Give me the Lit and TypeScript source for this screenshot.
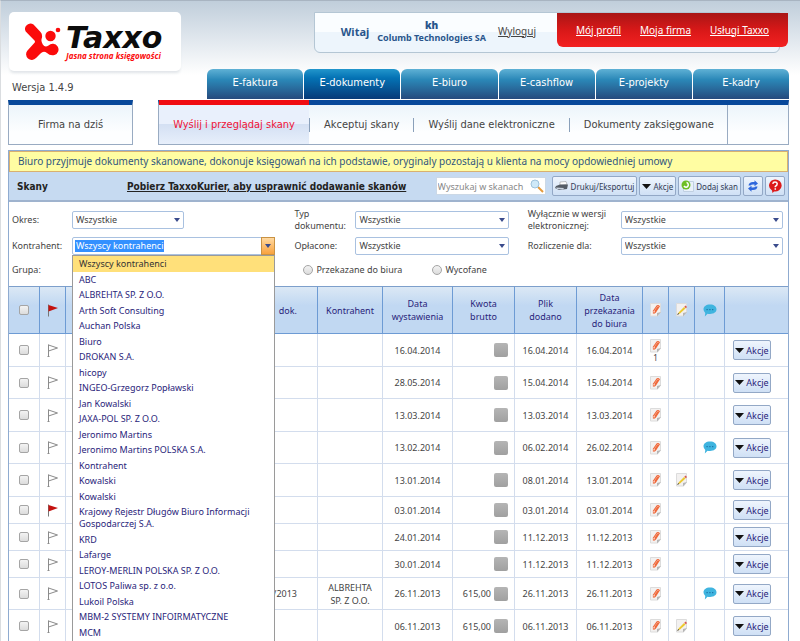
import { LitElement, html, css, svg, nothing } from "lit";
import { customElement } from "lit/decorators.js";
import { classMap } from "lit/directives/class-map.js";

interface Row {
  flag?: boolean;
  doc?: string;
  contractor?: string;
  issued: string;
  amount?: string;
  added: string;
  sent: string;
  count?: number;
  note?: boolean;
  comment?: boolean;
  compact?: boolean;
}

const ROWS: Row[] = [
  { issued: "16.04.2014", added: "16.04.2014", sent: "16.04.2014", count: 1 },
  { issued: "28.05.2014", added: "15.04.2014", sent: "15.04.2014" },
  { issued: "13.03.2014", added: "13.03.2014", sent: "13.03.2014" },
  { issued: "13.02.2014", added: "06.02.2014", sent: "26.02.2014", comment: true },
  { issued: "13.01.2014", added: "08.01.2014", sent: "13.01.2014", note: true },
  { issued: "03.01.2014", added: "03.01.2014", sent: "03.01.2014", flag: true, compact: true },
  { issued: "24.01.2014", added: "11.12.2013", sent: "11.12.2013", compact: true },
  { issued: "30.01.2014", added: "11.12.2013", sent: "11.12.2013", compact: true },
  { doc: "/2013", contractor: "ALBREHTA SP. Z O.O.", issued: "26.11.2013", amount: "615,00", added: "26.11.2013", sent: "26.11.2013", comment: true },
  { issued: "06.11.2013", amount: "615,00", added: "06.11.2013", sent: "06.11.2013", note: true },
];

const CONTRACTORS = [
  "Wszyscy kontrahenci", "ABC", "ALBREHTA SP. Z O.O.", "Arth Soft Consulting", "Auchan Polska",
  "Biuro", "DROKAN S.A.", "hicopy", "INGEO-Grzegorz Popławski", "Jan Kowalski",
  "JAXA-POL SP. Z O.O.", "Jeronimo Martins", "Jeronimo Martins POLSKA S.A.", "Kontrahent",
  "Kowalski", "Kowalski", "Krajowy Rejestr Długów Biuro Informacji Gospodarczej S.A.", "KRD",
  "Lafarge", "LEROY-MERLIN POLSKA SP. Z O.O.", "LOTOS Paliwa sp. z o.o.", "Lukoil Polska",
  "MBM-2 SYSTEMY INFOIRMATYCZNE", "MCM",
];

const TABS = ["E-faktura", "E-dokumenty", "E-biuro", "E-cashflow", "E-projekty", "E-kadry"];
const SUBTABS = ["Wyślij i przeglądaj skany", "Akceptuj skany", "Wyślij dane elektroniczne", "Dokumenty zaksięgowane"];

const icon = (w: number, h: number, body: unknown) =>
  html`<svg width=${w} height=${h} viewBox="0 0 ${w} ${h}" aria-hidden="true">${body}</svg>`;

const page = svg`<path d="M.5 .5h10v9l-3 3.500h-7z" fill="#f3f1f0" stroke="#dcdcdc"/><path d="M11 9l-4 4.500V10z" fill="#b5b5b5"/>`;

const clipIcon = () => icon(12, 14, svg`${page}
  <path d="M3 8.500L6.500 3.500Q8 1.800 9.300 3.300L6 8.500Q4.300 11 3 9.500M4.700 8.500L7.800 4.200" fill="none" stroke="#f0683a" stroke-width="1.200"/>`);
const noteIcon = () => icon(12, 14, svg`${page}
  <path d="M1.500 11.500L3 9L8 4L9.500 5.500L4 10.500Z" fill="#ecc92f"/><path d="M8.300 3.700l1.200-1.200 1.500 1.500-1.200 1.200z" fill="#d8574f"/><path d="M1 12l1.200-2 1 1z" fill="#444"/>`);
const commentIcon = () => icon(14, 13, svg`
  <path d="M7 .5C11 .5 13.500 2.600 13.500 5.300S11 10 7 10C6 10 5.200 9.900 4.500 9.700L1.800 12.500 2.300 9Q.5 7.500 .5 5.300C.5 2.600 3 .5 7 .5Z" fill="#3fb4df"/>
  <g fill="#1b6fa5"><rect x="3.500" y="5" width="1.200" height="1.200"/><rect x="6.300" y="5" width="1.200" height="1.200"/><rect x="9.100" y="5" width="1.200" height="1.200"/></g>`);
const flagIcon = (red = false) => icon(12, 13, red
  ? svg`<path d="M1.500 .5v12" stroke="#777" stroke-width="1"/><path d="M1.500 1L11 4 1.500 7.500z" fill="#c4120f"/>`
  : svg`<path d="M1.500 .5v12M1.500 1L10.500 4 1.500 7M.5 12.500h2" fill="none" stroke="#8b8b8b"/>`);
const downIcon = () => icon(9, 5, svg`<path d="M0 0h9L4.500 5z" fill="#111"/>`);
const printIcon = () => icon(14, 10, svg`
  <path d="M5 1l6-.5 1 3-7 1z" fill="#fff" stroke="#888" stroke-width=".5"/><path d="M1 5L5 3.500h8L12 8 4 9 0 7z" fill="#555c66"/><path d="M1 6.500l8 .5-1 1.500-6-.5z" fill="#c9d2de"/>`);
const addIcon = () => icon(13, 14, svg`
  <path d="M2.500 2.500h10v10h-10z" fill="#e9f1fa" stroke="#c0d0e2"/><circle cx="5" cy="6" r="4.500" fill="#6dbf25"/>
  <path d="M3 7a2.300 2.300 0 1 0 2.500-3.400" fill="none" stroke="#fff" stroke-width="1.500"/>`);
const refreshIcon = () => icon(12, 12, svg`
  <path d="M1.500 5.500Q2 2 6 2H7.500V.2L11 3.500 7.500 6.200V4.500H6Q4 4.500 3.500 5.500Z" fill="#2e67dc"/>
  <path d="M10.500 6.500Q10 10 6 10H4.500V11.800L1 8.500 4.500 5.800V7.500H6Q8 7.500 8.500 6.500Z" fill="#2e67dc"/>`);
const helpIcon = () => icon(14, 14, svg`
  <path d="M7 .5a6.500 6 0 1 1-1 11.900L4.500 14 4 11.500A6.500 6 0 0 1 7 .5Z" fill="#dc1a1a"/>
  <path d="M4.800 4.800Q5 3 7 3t2.200 1.700T7.300 7.500v.8M7.300 9.300v1.400" fill="none" stroke="#fff" stroke-width="1.500"/>`);
const searchIcon = () => icon(14, 14, svg`
  <path d="M8 8l5 5" stroke="#e59a3c" stroke-width="2"/><circle cx="5" cy="5" r="4" fill="#cfe9f8" stroke="#9fc3dc"/>`);

const logoMark = () => icon(37, 39, svg`
  <g fill="#fb0b0b"><path d="M9.500 2.500A5.400 5.400 0 0 0 1.700 9.500L10.500 18.500Q11.500 19.800 10.300 21L3.500 28.500A5.500 5.500 0 1 0 12 36L16.500 31.500Q19.500 28.500 23 31Q26 34 30.500 33A5.800 5.800 0 1 0 24.500 23.500Q21 26 18.800 22.500Q16.500 19 18 15.500Q18.500 12 16.500 10Z"/>
  <circle cx="26.500" cy="14" r="5.200"/><circle cx="34" cy="8" r="2.300"/></g>`);

@customElement("app-root")
export class AppRoot extends LitElement {
  static styles = css`
    :host {
      display: block;
      box-sizing: border-box;
      min-height: 100vh;
      overflow: hidden;
      padding: 11px 11px 0 7px;
      border-top: 1px solid #a8b4c1;
      border-left: 1px solid #dadde0;
      background: linear-gradient(#c0cedb, #ffffff 74px);
      font: 9px/13px "Noto Sans", "Open Sans", sans-serif;
      color: #444;
    }
    * { box-sizing: border-box; }
    button, input, select { font: inherit; color: inherit; margin: 0; }
    svg { display: block; flex: none; }
    a { color: inherit; }
    ul { list-style: none; margin: 0; padding: 0; }

    .top { display: grid; grid-template-columns: 199px 1fr; height: 87px; }
    .brand { display: flex; flex-direction: column; gap: 10px; }
    .logo {
      display: flex; align-items: center; gap: 5px;
      width: 172px; height: 59px; margin-left: 1px; padding: 0 0 0 15px;
      border-radius: 5px; background: #fff; box-shadow: 0 3px 3px -1px #e0e4e8;
      text-decoration: none;
    }
    .logo-text { display: flex; flex-direction: column; }
    .name { font: italic bold 30px/28px "DejaVu Sans", sans-serif; color: #0c0c0c; }
    .tagline { font: italic bold 8px/8px "Open Sans", sans-serif; color: #fb0b0b; white-space: nowrap; }
    .version { padding-left: 4px; font: 11px/14px "DejaVu Sans Condensed", sans-serif; }

    .right { display: flex; flex-direction: column; justify-content: space-between; }
    .user {
      display: flex; align-items: flex-start; height: 41px; margin: 0 9px 0 107px;
      border: 1px solid #b4c6d4; border-radius: 0 0 6px 6px;
      background: linear-gradient(#fafdff 50%, #edf5fc 50%);
    }
    .hello { display: flex; flex: 1; align-items: center; justify-content: flex-end; gap: 8px; height: 36px; padding-right: 21px; color: #29558c; font-weight: bold; }
    .witaj { font-size: 11px; }
    .who { text-align: center; font-size: 9px; line-height: 12px; }
    .who strong { display: block; font-size: 10px; line-height: 13px; }
    .logout { margin-left: 4px; color: #444; font-weight: normal; font-size: 10px; }
    .links {
      display: flex; align-items: center; justify-content: space-between; width: 231px; height: 34px; margin-right: -9px; padding: 0 19px;
      border-radius: 0 0 6px 6px; background: linear-gradient(#a91616, #d81818 50%, #f32121);
      color: #fff; font-size: 10px;
    }
    .tabs { display: flex; gap: 1px; }
    .tabs a {
      flex: 1 1 0; height: 30px; padding-top: 6px; border-radius: 6px 6px 0 0;
      background: linear-gradient(#5fb1d5, #2b88b8 35%, #264a7d);
      color: #fff; font: 11px/16px "DejaVu Sans Condensed", sans-serif; text-align: center; text-decoration: none;
    }
    .tabs a.on { background: linear-gradient(#2296cc, #0472b4 30%, #083a78); }

    .subnav { display: flex; gap: 25px; margin: 1px 0 5px; font: 11px/13px "DejaVu Sans Condensed", sans-serif; }
    .today, .menu {
      display: flex; height: 45px; border: 1px solid #99abc2; border-top: 5px solid #07489a;
      background: linear-gradient(#ecf5fb, #fdfeff 70%);
    }
    .today { width: 125px; align-items: center; justify-content: center; text-decoration: none; }
    .menu { flex: 1; align-items: center; padding-right: 60px; border-color: #07489a #99abc2 #99abc2; }
    .menu a { position: relative; display: flex; align-items: center; justify-content: center; flex: auto; height: 14px; border-left: 1px solid #8aa0ba; text-decoration: none; }
    .menu a:first-child {
      flex: none; width: 150px; height: 44px; margin-top: -5px; border: 0; border-top: 5px solid #f00c12;
      color: #ef1337; background: linear-gradient(#e9f0fc 50%, #d4e0f3 50%, #e7effb);
    }
    .menu a:last-child::after { content: ""; position: absolute; right: 0; top: -13px; height: 39px; border-right: 1px solid #99abc2; }

    .panel { border: 1px solid #8fabd0; border-bottom: 0; background: #fff; }
    .notice { margin: 0; padding: 0 8px; border: 1px solid #d8b070; background: #fffda2; color: #31567e; font-size: 10px; line-height: 19px; white-space: nowrap; }
    .toolbar { display: flex; align-items: center; gap: 2px; height: 30px; padding: 0 3px 0 8px; border-bottom: 2px solid #9fb3ce; background: #c6daf1; }
    .toolbar h1 { width: 108px; margin: 0; font: bold 10px/13px "DejaVu Sans Condensed", sans-serif; color: #222; }
    .toolbar .courier { margin-right: auto; font: bold 10px/13px "DejaVu Sans Condensed", sans-serif; color: #222; white-space: nowrap; }
    .search { display: flex; align-items: center; width: 110px; height: 18px; margin-right: 4px; padding-right: 1px; border: 1px solid #cbd8e6; background: #fff; }
    .search input { flex: 1; min-width: 0; padding: 0 0 0 1px; border: 0; outline: 0; background: none; }
    .search input::placeholder { color: #888; opacity: 1; }
    .btn {
      display: inline-flex; align-items: center; justify-content: center; gap: 2px; height: 20px; padding: 0 2px;
      border: 1px solid #93a8c6; border-radius: 2px; background: linear-gradient(#eff5fd, #cfe0f5);
      color: #333c55; white-space: nowrap;
    }
    .toolbar .btn { padding: 0 2px; font-size: 8px; }
    .toolbar .btn.square { width: 20px; padding: 0; }

    .filters {
      display: grid; grid-template-columns: 60px 222fr 61px 172fr 93px 162fr; grid-template-rows: 27px 26px 22px;
      align-items: center; height: 84px; padding: 4px 5px 5px 3px; line-height: 12px;
    }
    .field { position: relative; margin-right: 19px; height: 18px; }
    .field.last { margin-right: 0; }
    .field.short { width: 112px; }
    .field select, .field input {
      display: block; width: 100%; height: 18px; padding: 0 3px; border: 1px solid #a9c1e0; border-radius: 2px;
      background: #fff; appearance: none; outline: 0;
    }
    .field::after {
      content: ""; position: absolute; right: 4px; top: 7px; border: 3px solid transparent; border-top: 4px solid #3a4b8c; border-bottom: 0;
      pointer-events: none;
    }
    .combo .typed { position: absolute; left: 3px; top: 3px; height: 12px; padding: 0 1px; background: #3390ff; color: #fff; pointer-events: none; }
    .combo button { position: absolute; right: 0; top: 0; width: 14px; height: 18px; padding: 0; border: 1px solid #c99243; background: linear-gradient(#ffd9a1, #f9a23d); }
    .options {
      position: absolute; z-index: 2; left: 0; right: 0; top: 18px; padding-bottom: 12px;
      border: 1px solid #9a9a9a; background: #fff; color: #29247a;
    }
    .options li { padding: 2px 20px 1px 6px; line-height: 12px; }
    .options li:nth-child(odd) { padding-bottom: 2px; }
    .options li.on { background: #ffe07a; color: #333; }
    .radios { grid-column: 3 / -1; display: flex; padding-left: 9px; }
    .radios label { display: flex; align-items: center; gap: 3px; width: 129px; }

    input[type="checkbox"], input[type="radio"] { appearance: none; display: block; width: 10px; height: 10px; border: 1px solid #a5a5a5; border-radius: 2px; background: linear-gradient(#f3f3f3, #dcdcdc); }
    input[type="radio"] { border-radius: 50%; }
    td input, th input { margin: 0 auto; }

    table { width: 100%; table-layout: fixed; border-collapse: separate; border-spacing: 0; }
    th, td { padding: 0 6px; border: 0 solid #d3dded; border-width: 0 1px 1px 0; text-align: center; font-weight: normal; }
    th { height: 48px; border-color: #6d9bd4; border-top: 1px solid #7d9fcb; background: linear-gradient(#dbe8f5, #c1d8f2 40%); color: #29247a; }
    th:last-child, td:last-child { border-right: 0; }
    th svg, td svg { margin: 0 auto; }
    tbody tr { height: 33px; }
    tbody tr:nth-child(even) { height: 32px; }
    tbody tr:nth-child(n + 9) { height: 32px; }
    tbody tr.compact { height: 27px; }
    tbody tr:last-child td { border-bottom: 0; }
    .w-check { width: 31px; } .w-flag { width: 26px; } .w-kontr { width: 65px; } .w-date { width: 70px; }
    .w-sum { width: 62px; } .w-sent { width: 66px; } .w-clip { width: 26px; } .w-com { width: 30px; } .w-act { width: 63px; }
    .num { padding-right: 20px; text-align: right; }
    .sum { display: flex; align-items: center; justify-content: flex-end; gap: 3px; }
    .sum i { width: 14px; height: 14px; border-radius: 2px; background: linear-gradient(#b5b5b5, #a0a0a0); }
    .count { display: block; font-size: 8px; line-height: 9px; }
    td .btn { width: 38px; margin-right: 9px; vertical-align: middle; color: #29247a; }
    td .btn svg, .btn svg { margin: 0; }
  `;

  private choice(id: string, label: string, cls = "") {
    return html`<label for=${id}>${label}</label>
      <div class="field ${cls}"><select id=${id}><option>Wszystkie</option></select></div>`;
  }

  private row(r: Row) {
    return html`<tr class=${classMap({ compact: !!r.compact })}>
      <td><input type="checkbox" aria-label="Zaznacz" /></td>
      <td>${flagIcon(r.flag)}</td>
      <td class="num">${r.doc ?? nothing}</td>
      <td>${r.contractor ?? nothing}</td>
      <td>${r.issued}</td>
      <td><div class="sum">${r.amount ?? nothing}<i></i></div></td>
      <td>${r.added}</td>
      <td>${r.sent}</td>
      <td>${clipIcon()}${r.count ? html`<span class="count">${r.count}</span>` : nothing}</td>
      <td>${r.note ? noteIcon() : nothing}</td>
      <td>${r.comment ? commentIcon() : nothing}</td>
      <td><button class="btn">${downIcon()}Akcje</button></td>
    </tr>`;
  }

  render() {
    return html`
      <header class="top">
        <div class="brand">
          <a class="logo" href="#">${logoMark()}<span class="logo-text"><span class="name">Taxxo</span><span class="tagline">Jasna strona księgowości</span></span></a>
          <div class="version">Wersja 1.4.9</div>
        </div>
        <div class="right">
          <div class="user">
            <div class="hello"><span class="witaj">Witaj</span>
              <div class="who"><strong>kh</strong>Columb Technologies SA</div>
              <a class="logout" href="#">Wyloguj</a></div>
            <nav class="links"><a href="#">Mój profil</a><a href="#">Moja firma</a><a href="#">Usługi Taxxo</a></nav>
          </div>
          <nav class="tabs">${TABS.map((t, i) => html`<a href="#" class=${classMap({ on: i === 1 })}>${t}</a>`)}</nav>
        </div>
      </header>
      <div class="subnav">
        <a class="today" href="#">Firma na dziś</a>
        <nav class="menu">${SUBTABS.map((t) => html`<a href="#">${t}</a>`)}</nav>
      </div>
      <main class="panel">
        <p class="notice">Biuro przyjmuje dokumenty skanowane, dokonuje księgowań na ich podstawie, oryginaly pozostają u klienta na mocy opdowiedniej umowy</p>
        <div class="toolbar">
          <h1>Skany</h1>
          <a class="courier" href="#">Pobierz TaxxoKurier, aby usprawnić dodawanie skanów</a>
          <div class="search"><input type="text" placeholder="Wyszukaj w skanach" aria-label="Wyszukaj w skanach" />${searchIcon()}</div>
          <button class="btn">${printIcon()}Drukuj/Eksportuj</button>
          <button class="btn">${downIcon()}Akcje</button>
          <button class="btn">${addIcon()}Dodaj skan</button>
          <button class="btn square" aria-label="Odśwież">${refreshIcon()}</button>
          <button class="btn square" aria-label="Pomoc">${helpIcon()}</button>
        </div>
        <form class="filters">
          ${this.choice("okres", "Okres:", "short")}
          ${this.choice("typ", "Typ dokumentu:")}
          ${this.choice("wersja", "Wyłącznie w wersji elektronicznej:", "last")}
          <label for="kontrahent">Kontrahent:</label>
          <div class="field combo">
            <input id="kontrahent" type="text" role="combobox" aria-expanded="true" aria-controls="lista" />
            <span class="typed">Wszyscy kontrahenci</span>
            <button type="button" aria-label="Rozwiń"></button>
            <ul class="options" id="lista" role="listbox">
              ${CONTRACTORS.map((c, i) => html`<li role="option" class=${classMap({ on: i === 0 })}>${c}</li>`)}
            </ul>
          </div>
          ${this.choice("oplacone", "Opłacone:")}
          ${this.choice("rozliczenie", "Rozliczenie dla:", "last")}
          <span>Grupa:</span>
          <div class="radios">
            <label><input type="radio" name="stan" />Przekazane do biura</label>
            <label><input type="radio" name="stan" />Wycofane</label>
          </div>
        </form>
        <table>
          <colgroup>
            <col class="w-check" /><col class="w-flag" /><col /><col class="w-kontr" /><col class="w-date" /><col class="w-sum" />
            <col class="w-sum" /><col class="w-sent" /><col class="w-clip" /><col class="w-clip" /><col class="w-com" /><col class="w-act" />
          </colgroup>
          <thead><tr>
            <th><input type="checkbox" aria-label="Zaznacz wszystkie" /></th><th>${flagIcon(true)}</th>
            <th class="num">dok.</th><th>Kontrahent</th><th>Data wystawienia</th><th>Kwota<br />brutto</th><th>Plik<br />dodano</th>
            <th>Data przekazania do biura</th><th>${clipIcon()}</th><th>${noteIcon()}</th><th>${commentIcon()}</th><th></th>
          </tr></thead>
          <tbody>${ROWS.map((r) => this.row(r))}</tbody>
        </table>
      </main>`;
  }
}
